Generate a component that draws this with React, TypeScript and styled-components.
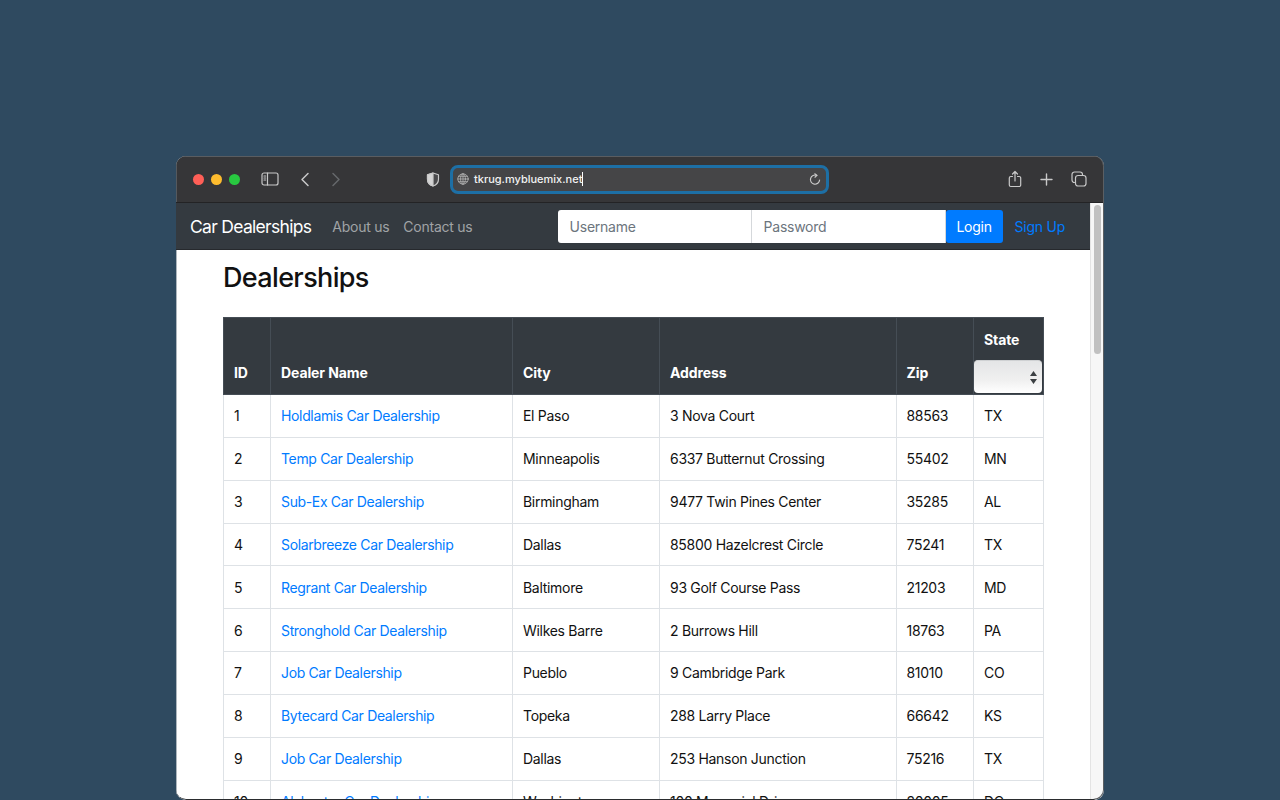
import React from 'react';
import styled, { createGlobalStyle } from 'styled-components';

const GlobalStyle = createGlobalStyle`
  html, body {
    margin: 0;
    height: 100%;
    overflow: hidden;
    background: #2f4a60;
    font-family: Inter, "Liberation Sans", sans-serif;
  }
`;

const Page = styled.div`
  height: 800px;
  padding: 156px 176px 0;
  box-sizing: border-box;
`;

const Window = styled.div`
  position: relative;
  width: 928px;
  height: 644px;
  border-radius: 10px;
  overflow: hidden;
  display: flex;
  flex-direction: column;
  background: #fff;
  &::after {
    content: '';
    position: absolute;
    inset: 0;
    border-radius: 10px;
    border-bottom: 1px solid #2a2c2e;
    box-shadow: inset -1px 0 0 #5b5f63;
    pointer-events: none;
  }
`;

const Toolbar = styled.div`
  height: 47px;
  flex: none;
  box-sizing: border-box;
  padding-bottom: 1px;
  background: #363638;
  border-top: 1px solid #5a5d61;
  border-bottom: 1px solid #232325;
  box-shadow: inset 1px 0 0 #55595e;
  display: flex;
  align-items: center;
  color: #d6d6d6;
`;

const Lights = styled.div`
  display: flex;
  gap: 7px;
  margin-left: 17px;
`;

const Light = styled.span<{ $color: string }>`
  width: 11px;
  height: 11px;
  border-radius: 50%;
  background: ${p => p.$color};
`;

const ToolIcon = styled.svg<{ $left?: number; $dim?: boolean }>`
  flex: none;
  margin-left: ${p => p.$left ?? 0}px;
  fill: none;
  stroke: ${p => (p.$dim ? '#66686b' : '#c9c9c9')};
  stroke-width: 1.2;
  stroke-linecap: round;
  stroke-linejoin: round;
`;

const AddressBar = styled.div`
  width: 379px;
  height: 29px;
  flex: none;
  box-sizing: border-box;
  margin-left: 10px;
  padding: 0 5px 0 4px;
  display: flex;
  align-items: center;
  background: #454547;
  border: 3px solid #1d6fa5;
  border-radius: 8px;
`;

const Url = styled.span`
  margin-left: 5px;
  font-size: 11px;
  font-weight: 500;
  color: #f2f2f2;
  line-height: 15px;
  flex: 1;
`;

const UrlText = styled.span`
  border-right: 1px solid #fff;
`;

const Body = styled.div`
  flex: 1;
  min-height: 0;
  display: flex;
`;

const Main = styled.div`
  width: 914px;
  flex: none;
  display: flex;
  flex-direction: column;
`;

const Nav = styled.nav`
  height: 47px;
  flex: none;
  box-sizing: border-box;
  padding-left: 14px;
  background: #343a40;
  border-bottom: 1px solid #26292d;
  display: flex;
  align-items: center;
  letter-spacing: -0.25px;
`;

const Brand = styled.a`
  font-size: 17.5px;
  letter-spacing: -0.7px;
  color: #fff;
  margin-right: 21px;
`;

const NavLink = styled.a`
  font-size: 14px;
  color: #a0a3a6;
  margin-right: 14px;
`;

const LoginGroup = styled.form`
  margin-left: auto;
  display: flex;
  align-items: center;
  margin-right: 25px;
`;

const Field = styled.input`
  width: 194px;
  height: 33px;
  box-sizing: border-box;
  padding: 0 12px;
  border: none;
  border-right: 1px solid #d5d8db;
  background: #fff;
  font: inherit;
  font-size: 14px;
  letter-spacing: -0.25px;
  outline: none;
  &:first-child {
    border-radius: 3px 0 0 3px;
  }
  &::placeholder {
    color: #6c757d;
    opacity: 1;
  }
`;

const LoginButton = styled.button`
  width: 57px;
  height: 33px;
  border: none;
  border-radius: 3px;
  background: #007bff;
  color: #fff;
  font: inherit;
  font-size: 14px;
  letter-spacing: -0.25px;
  padding: 0;
`;

const SignUp = styled.a`
  margin-left: 12px;
  font-size: 14px;
  color: #007bff;
`;

const Content = styled.main`
  flex: 1;
  min-height: 0;
  overflow: hidden;
  padding-left: 47px;
  box-shadow: inset 1px 0 0 #aeb6bd;
`;

const Title = styled.h1`
  margin: 10px 0 21px;
  font-size: 27px;
  line-height: 36px;
  font-weight: 500;
  letter-spacing: -0.65px;
  color: #111;
`;

const Table = styled.table`
  width: 819.5px;
  table-layout: fixed;
  border-collapse: collapse;
  font-size: 14px;
  letter-spacing: -0.3px;
  color: #111;
`;

const Head = styled.th<{ $width: number }>`
  width: ${p => p.$width}px;
  height: 77px;
  box-sizing: border-box;
  padding: 0 0 13px 10px;
  vertical-align: bottom;
  text-align: left;
  font-weight: 700;
  line-height: 17px;
  letter-spacing: -0.1px;
  color: #fff;
  background: #343a40;
  border: 1px solid #454d55;
`;

const StateHead = styled(Head)`
  padding: 0 0 1px;
`;

const StateLabel = styled.div`
  padding-left: 10px;
  margin-bottom: 12px;
`;

const StateSelect = styled.div`
  height: 33px;
  box-sizing: border-box;
  margin-right: 1px;
  border-radius: 4px;
  border-top: 1px solid #cfd1d3;
  background: linear-gradient(#e4e5e6, #f0f0f0 60%, #ffffff);
  display: flex;
  align-items: center;
  justify-content: flex-end;
  padding-right: 5px;
`;

const Cell = styled.td`
  height: 42.85px;
  box-sizing: border-box;
  padding: 0 0 0 10px;
  border: 1px solid #dee2e6;
  white-space: nowrap;
  overflow: hidden;
`;

const DealerLink = styled.a`
  color: #007bff;
  letter-spacing: -0.35px;
`;

const Scrollbar = styled.div`
  flex: none;
  width: 13px;
  background: #f7f7f7;
  border-left: 1px solid #e4e4e4;
  box-sizing: border-box;
  padding: 2px 2px 0 3px;
`;

const Thumb = styled.div`
  height: 149px;
  border-radius: 4px;
  background: #c1c1c1;
`;

const dealers = [
  [1, 'Holdlamis Car Dealership', 'El Paso', '3 Nova Court', '88563', 'TX'],
  [2, 'Temp Car Dealership', 'Minneapolis', '6337 Butternut Crossing', '55402', 'MN'],
  [3, 'Sub-Ex Car Dealership', 'Birmingham', '9477 Twin Pines Center', '35285', 'AL'],
  [4, 'Solarbreeze Car Dealership', 'Dallas', '85800 Hazelcrest Circle', '75241', 'TX'],
  [5, 'Regrant Car Dealership', 'Baltimore', '93 Golf Course Pass', '21203', 'MD'],
  [6, 'Stronghold Car Dealership', 'Wilkes Barre', '2 Burrows Hill', '18763', 'PA'],
  [7, 'Job Car Dealership', 'Pueblo', '9 Cambridge Park', '81010', 'CO'],
  [8, 'Bytecard Car Dealership', 'Topeka', '288 Larry Place', '66642', 'KS'],
  [9, 'Job Car Dealership', 'Dallas', '253 Hanson Junction', '75216', 'TX'],
  [10, 'Alabaster Car Dealership', 'Washington', '100 Memorial Drive', '20005', 'DC'],
];

const Globe = () => (
  <ToolIcon width="12" height="12" viewBox="0 0 12 12" style={{ strokeWidth: 0.8, stroke: '#b5b5b5' }}>
    <circle cx="6" cy="6" r="5.2" />
    <ellipse cx="6" cy="6" rx="2.4" ry="5.2" />
    <path d="M6 .8v10.4M.8 6h10.4M1.600 3.300h8.800M1.600 8.700h8.800" />
  </ToolIcon>
);

const App: React.FC = () => {
  return (
    <Page>
      <GlobalStyle />
      <Window>
        <Toolbar>
          <Lights>
            <Light $color="#ff5f57" />
            <Light $color="#febc2e" />
            <Light $color="#28c840" />
          </Lights>
          <ToolIcon $left={21} width="18" height="14" viewBox="0 0 18 14">
            <rect x="1" y="1" width="16" height="12" rx="2" />
            <path d="M6.500 1v12M3 4h1.600M3 6h1.600M3 8h1.600" />
          </ToolIcon>
          <ToolIcon $left={21} width="10" height="15" viewBox="0 0 10 15" style={{ strokeWidth: 1.5 }}>
            <path d="M8 1.500 2 7.500l6 6" />
          </ToolIcon>
          <ToolIcon $left={21} $dim width="10" height="15" viewBox="0 0 10 15" style={{ strokeWidth: 1.5 }}>
            <path d="m2 1.500 6 6-6 6" />
          </ToolIcon>
          <ToolIcon $left={85} width="14" height="15" viewBox="0 0 14 15">
            <path d="M7 1 1.500 2.800v4.400C1.500 10.600 4 13 7 14c3-1 5.500-3.400 5.500-6.800V2.800L7 1Z" fill="#4a4a4c" stroke="#c9c9c9" />
            <path d="M7 1 1.500 2.800v4.400C1.500 10.600 4 13 7 14V1Z" fill="#d4d4d4" />
          </ToolIcon>
          <AddressBar>
            <Globe />
            <Url>
              <UrlText>tkrug.mybluemix.net</UrlText>
            </Url>
            <ToolIcon width="12" height="13" viewBox="0 0 12 13">
              <path d="M7.800 2.400A4.600 4.600 0 1 0 10.600 7" />
              <path d="M5.800.8 7.900 2.400 6 4.200" />
            </ToolIcon>
          </AddressBar>
          <ToolIcon $left={179} width="14" height="18" viewBox="0 0 14 18">
            <path d="M4.500 6.500H2.800a1.500 1.500 0 0 0-1.500 1.500v7a1.500 1.500 0 0 0 1.500 1.500h8.400a1.500 1.500 0 0 0 1.500-1.500V8a1.500 1.500 0 0 0-1.500-1.500H9.500" />
            <path d="M7 11V1.500M4.500 4 7 1.500 9.500 4" />
          </ToolIcon>
          <ToolIcon $left={18} width="13" height="13" viewBox="0 0 13 13" style={{ strokeWidth: 1.4 }}>
            <path d="M6.500 1v11M1 6.500h11" />
          </ToolIcon>
          <ToolIcon $left={18} width="16" height="16" viewBox="0 0 16 16">
            <path d="M3.500 11.500A2.500 2.500 0 0 1 1 9V3.500A2.500 2.500 0 0 1 3.500 1H9a2.500 2.500 0 0 1 2.500 2.500" />
            <rect x="4.500" y="4.500" width="10.500" height="10.500" rx="2.500" />
          </ToolIcon>
        </Toolbar>
        <Body>
          <Main>
            <Nav>
              <Brand>Car Dealerships</Brand>
              <NavLink>About us</NavLink>
              <NavLink>Contact us</NavLink>
              <LoginGroup>
                <Field placeholder="Username" />
                <Field placeholder="Password" />
                <LoginButton type="button">Login</LoginButton>
                <SignUp>Sign Up</SignUp>
              </LoginGroup>
            </Nav>
            <Content>
              <Title>Dealerships</Title>
              <Table>
                <thead>
                  <tr>
                    <Head $width={47}>ID</Head>
                    <Head $width={242}>Dealer Name</Head>
                    <Head $width={147}>City</Head>
                    <Head $width={236.5}>Address</Head>
                    <Head $width={77.5}>Zip</Head>
                    <StateHead $width={69.5}>
                      <StateLabel>State</StateLabel>
                      <StateSelect>
                        <svg width="7" height="13" viewBox="0 0 7 13" fill="#3c4043">
                          <path d="M3.500 0 7 5H0ZM3.500 13 0 8h7Z" />
                        </svg>
                      </StateSelect>
                    </StateHead>
                  </tr>
                </thead>
                <tbody>
                  {dealers.map(d => (
                    <tr key={d[0]}>
                      <Cell>{d[0]}</Cell>
                      <Cell>
                        <DealerLink>{d[1]}</DealerLink>
                      </Cell>
                      <Cell>{d[2]}</Cell>
                      <Cell>{d[3]}</Cell>
                      <Cell>{d[4]}</Cell>
                      <Cell>{d[5]}</Cell>
                    </tr>
                  ))}
                </tbody>
              </Table>
            </Content>
          </Main>
          <Scrollbar>
            <Thumb />
          </Scrollbar>
        </Body>
      </Window>
    </Page>
  );
};

export default App;
